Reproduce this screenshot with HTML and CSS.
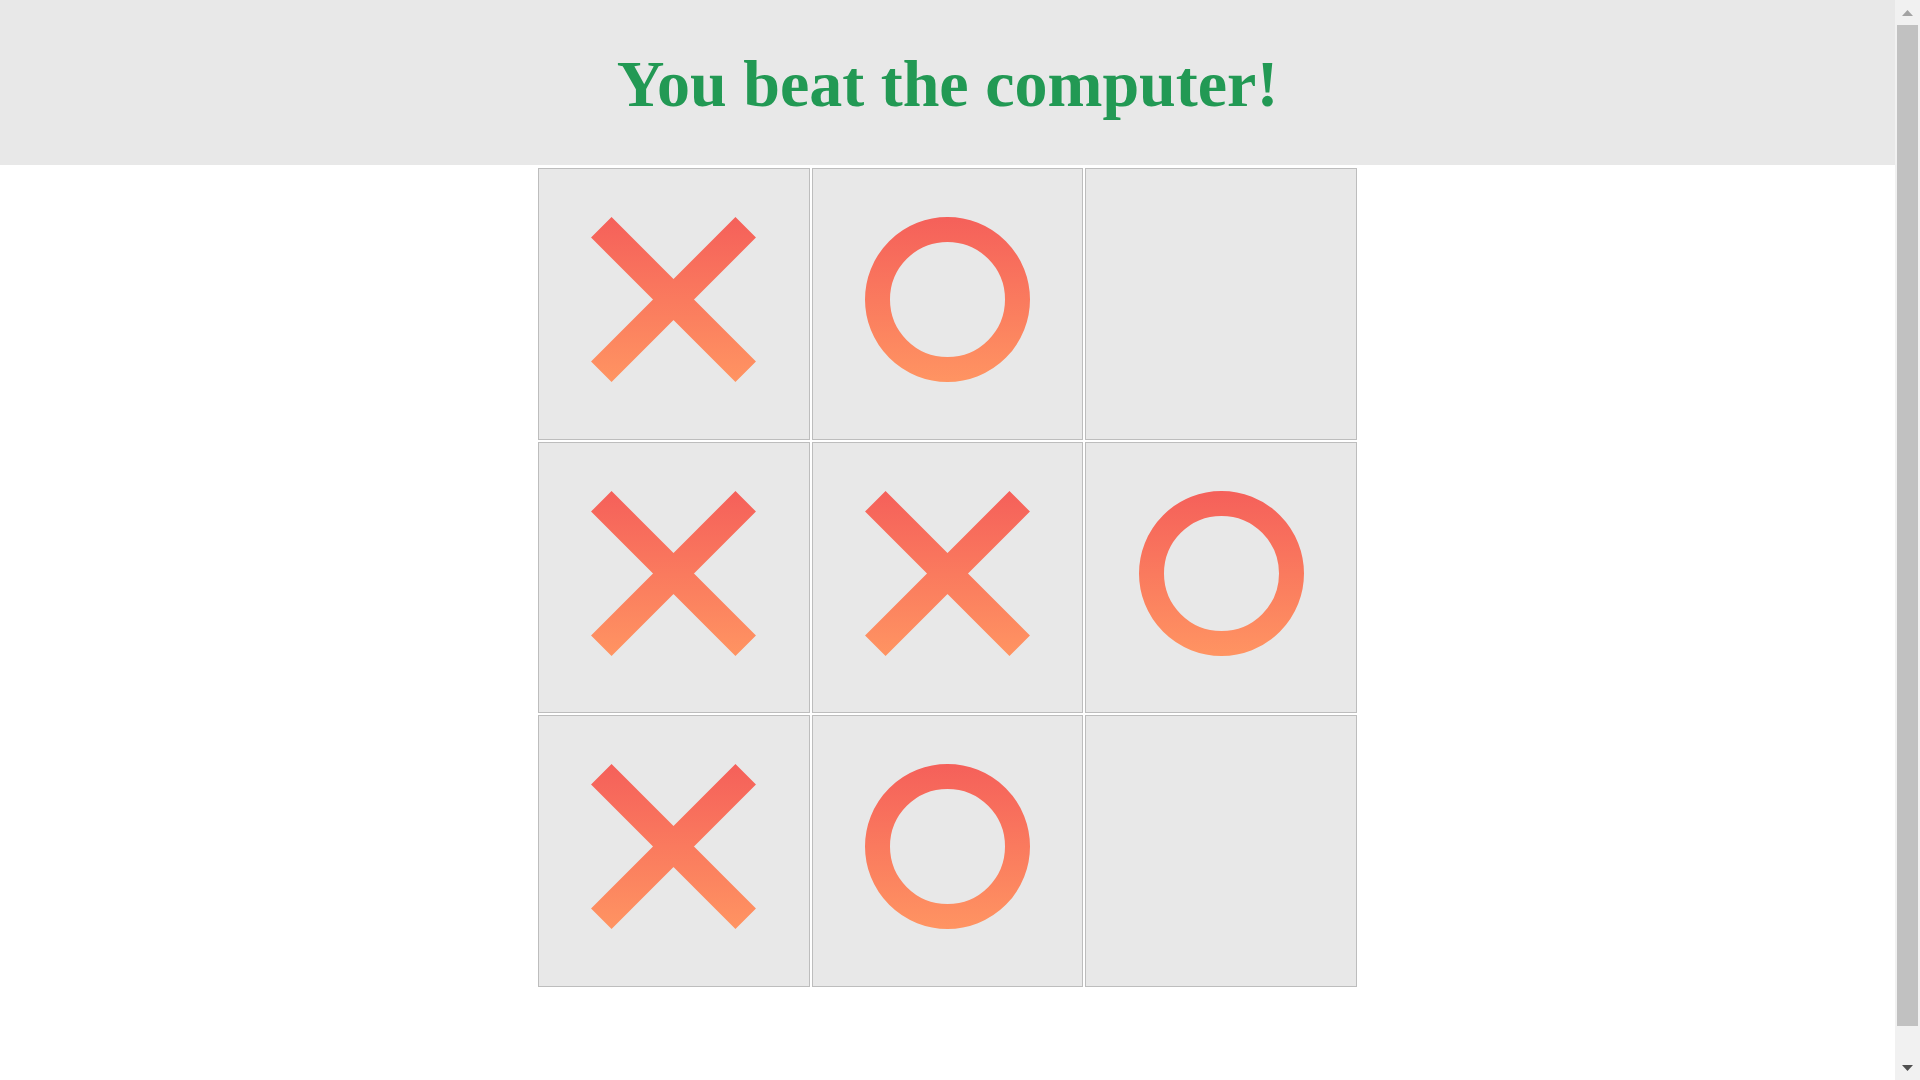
FILE: index.html
```html
<!DOCTYPE html>
<html lang="en">
<head>
<meta charset="utf-8">
<title>Tic Tac Toe</title>
<link rel="stylesheet" href="styles.css">
</head>
<body>
<svg class="defs" width="0" height="0" aria-hidden="true">
  <defs>
    <linearGradient id="gradU" x1="0" y1="0" x2="0" y2="165" gradientUnits="userSpaceOnUse">
      <stop offset="0" stop-color="#f5605a"/>
      <stop offset="1" stop-color="#ff9462"/>
    </linearGradient>
  </defs>
</svg>
<header class="banner">
  <h1 class="title">You beat the computer!</h1>
</header>
<main class="board">
  <div class="cell"><svg class="mark" viewBox="0 0 165 165"><path d="M10.3 10.3 L154.7 154.7 M154.7 10.3 L10.3 154.7" stroke="url(#gradU)" stroke-width="29" fill="none"/></svg></div>
  <div class="cell"><svg class="mark" viewBox="0 0 165 165"><circle cx="82.5" cy="82.5" r="70" stroke="url(#gradU)" stroke-width="25" fill="none"/></svg></div>
  <div class="cell"></div>
  <div class="cell"><svg class="mark" viewBox="0 0 165 165"><path d="M10.3 10.3 L154.7 154.7 M154.7 10.3 L10.3 154.7" stroke="url(#gradU)" stroke-width="29" fill="none"/></svg></div>
  <div class="cell"><svg class="mark" viewBox="0 0 165 165"><path d="M10.3 10.3 L154.7 154.7 M154.7 10.3 L10.3 154.7" stroke="url(#gradU)" stroke-width="29" fill="none"/></svg></div>
  <div class="cell"><svg class="mark" viewBox="0 0 165 165"><circle cx="82.5" cy="82.5" r="70" stroke="url(#gradU)" stroke-width="25" fill="none"/></svg></div>
  <div class="cell"><svg class="mark" viewBox="0 0 165 165"><path d="M10.3 10.3 L154.7 154.7 M154.7 10.3 L10.3 154.7" stroke="url(#gradU)" stroke-width="29" fill="none"/></svg></div>
  <div class="cell"><svg class="mark" viewBox="0 0 165 165"><circle cx="82.5" cy="82.5" r="70" stroke="url(#gradU)" stroke-width="25" fill="none"/></svg></div>
  <div class="cell"></div>
</main>
<aside class="scrollbar" aria-hidden="true">
  <div class="sb-btn"><svg width="11" height="6" viewBox="0 0 11 6"><polygon points="0,6 11,6 5.5,0" fill="#a3a3a3"/></svg></div>
  <div class="sb-track"><div class="sb-thumb"></div></div>
  <div class="sb-btn"><svg width="11" height="6" viewBox="0 0 11 6"><polygon points="0,0 11,0 5.5,6" fill="#505050"/></svg></div>
</aside>
</body>
</html>
```
FILE: styles.css
```css
html, body {
  margin: 0;
  padding: 0;
  background: #ffffff;
}

body {
  padding-right: 25px;
}

.defs {
  position: absolute;
  width: 0;
  height: 0;
}

.banner {
  background: #e8e8e8;
  height: 165px;
  box-sizing: border-box;
  padding-top: 46px;
}

.title {
  margin: 0;
  text-align: center;
  font-family: "Times New Roman", "Liberation Serif", serif;
  font-weight: bold;
  font-size: 66px;
  line-height: 75px;
  color: #229954;
}

.board {
  display: grid;
  grid-template-columns: repeat(3, 271.67px);
  grid-auto-rows: 271.67px;
  gap: 2px;
  justify-content: center;
  margin-top: 3px;
  padding-bottom: 142px;
}

.cell {
  box-sizing: border-box;
  background: #e8e8e8;
  border: 1px solid #bdbdbd;
  display: flex;
  justify-content: center;
  align-items: flex-start;
  padding-top: 48px;
}

.mark {
  display: block;
  width: 165px;
  height: 165px;
}

.scrollbar {
  position: fixed;
  top: 0;
  right: 0;
  width: 25px;
  height: 100vh;
  background: #f1f1f1;
  display: flex;
  flex-direction: column;
}

.sb-btn {
  height: 25px;
  display: flex;
  align-items: center;
  justify-content: center;
  flex: none;
}

.sb-track {
  flex: 1;
}

.sb-thumb {
  height: 1001px;
  margin: 0 2px;
  background: #c1c1c1;
}
```
